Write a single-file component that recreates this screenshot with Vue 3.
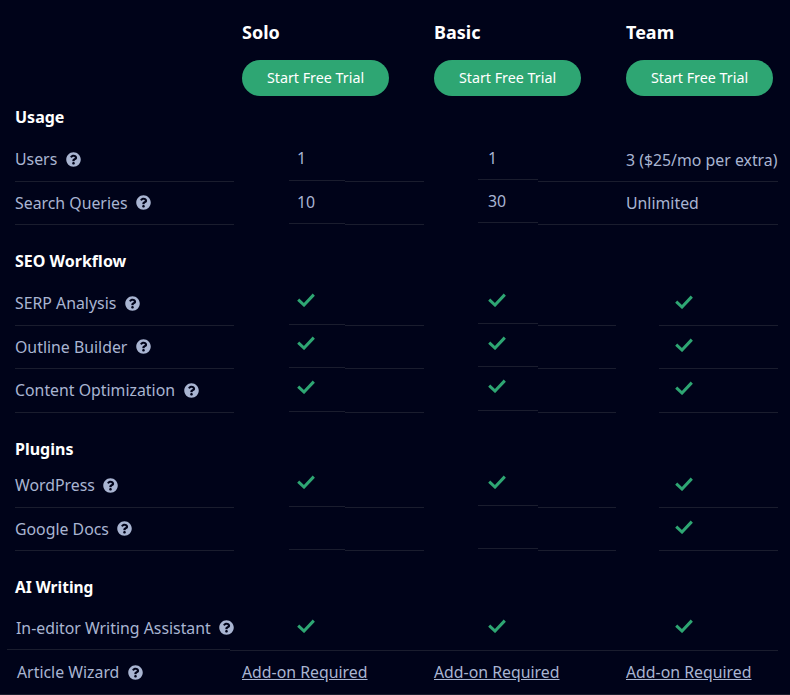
<script setup>
const plans = [
  { name: 'Solo', cls: 'solo' },
  { name: 'Basic', cls: 'basic' },
  { name: 'Team', cls: 'team' },
]
const sections = [
  {
    title: 'Usage',
    cls: 'usage',
    rows: [
      { label: 'Users', values: ['1', '1', '3 ($25/mo per extra)'] },
      { label: 'Search Queries', values: ['10', '30', 'Unlimited'] },
    ],
  },
  {
    title: 'SEO Workflow',
    cls: 'seo',
    rows: [
      { label: 'SERP Analysis', values: [true, true, true] },
      { label: 'Outline Builder', values: [true, true, true] },
      { label: 'Content Optimization', values: [true, true, true] },
    ],
  },
  {
    title: 'Plugins',
    cls: 'plugins',
    rows: [
      { label: 'WordPress', values: [true, true, true] },
      { label: 'Google Docs', values: [false, false, true] },
    ],
  },
]
</script>

<template>
  <main class="page">
    <header class="head">
      <div v-for="p in plans" :key="p.name" class="plan-head" :class="p.cls">
        <h2 class="plan-name">{{ p.name }}</h2>
        <a class="trial">Start Free Trial</a>
      </div>
    </header>

    <section v-for="s in sections" :key="s.title" class="section" :class="s.cls">
      <h3 class="title">{{ s.title }}</h3>
      <div v-for="r in s.rows" :key="r.label" class="row">
        <div class="label">
          <span>{{ r.label }}</span>
          <svg class="help" viewBox="0 0 512 512"><path d="M504 256c0 136.997-111.043 248-248 248S8 392.997 8 256C8 119.083 119.043 8 256 8s248 111.083 248 248zM262.655 90c-54.497 0-89.255 22.957-116.549 63.758-3.536 5.286-2.353 12.415 2.715 16.258l34.699 26.31c5.205 3.947 12.621 3.008 16.665-2.122 17.864-22.658 30.113-35.797 57.303-35.797 20.429 0 45.698 13.148 45.698 32.958 0 14.976-12.363 22.667-32.534 33.976C247.128 238.528 216 254.941 216 296v4c0 6.627 5.373 12 12 12h56c6.627 0 12-5.373 12-12v-1.333c0-28.462 83.186-29.647 83.186-106.667 0-58.002-60.165-102-116.531-102zM256 338c-25.365 0-46 20.635-46 46 0 25.364 20.635 46 46 46s46-20.636 46-46c0-25.365-20.635-46-46-46z"/></svg>
        </div>
        <div class="cell solo">
          <div class="seg main">
            <template v-if="r.values[0] === true"><svg class="check" viewBox="0 0 18 14"><path d="M1.2 6.6 7 12 16.8 1.6"/></svg></template>
            <template v-else>{{ r.values[0] || '' }}</template>
          </div>
          <div class="seg rest"></div>
        </div>
        <div class="cell basic">
          <div class="seg main">
            <template v-if="r.values[1] === true"><svg class="check" viewBox="0 0 18 14"><path d="M1.2 6.6 7 12 16.8 1.6"/></svg></template>
            <template v-else>{{ r.values[1] || '' }}</template>
          </div>
          <div class="seg rest"></div>
        </div>
        <div class="cell team" :class="{ text: typeof r.values[2] === 'string' }">
          <svg v-if="r.values[2] === true" class="check" viewBox="0 0 18 14"><path d="M1.2 6.6 7 12 16.8 1.6"/></svg>
          <template v-else>{{ r.values[2] }}</template>
        </div>
      </div>
    </section>

    <section class="section ai">
      <h3 class="title">AI Writing</h3>
      <div class="wide">
        <div class="label">
          <span>In-editor Writing Assistant</span>
          <svg class="help" viewBox="0 0 512 512"><path d="M504 256c0 136.997-111.043 248-248 248S8 392.997 8 256C8 119.083 119.043 8 256 8s248 111.083 248 248zM262.655 90c-54.497 0-89.255 22.957-116.549 63.758-3.536 5.286-2.353 12.415 2.715 16.258l34.699 26.31c5.205 3.947 12.621 3.008 16.665-2.122 17.864-22.658 30.113-35.797 57.303-35.797 20.429 0 45.698 13.148 45.698 32.958 0 14.976-12.363 22.667-32.534 33.976C247.128 238.528 216 254.941 216 296v4c0 6.627 5.373 12 12 12h56c6.627 0 12-5.373 12-12v-1.333c0-28.462 83.186-29.647 83.186-106.667 0-58.002-60.165-102-116.531-102zM256 338c-25.365 0-46 20.635-46 46 0 25.364 20.635 46 46 46s46-20.636 46-46c0-25.365-20.635-46-46-46z"/></svg>
        </div>
        <div class="marks">
          <div class="mark solo"><svg class="check" viewBox="0 0 18 14"><path d="M1.2 6.6 7 12 16.8 1.6"/></svg></div>
          <div class="mark basic"><svg class="check" viewBox="0 0 18 14"><path d="M1.2 6.6 7 12 16.8 1.6"/></svg></div>
          <div class="mark team"><svg class="check" viewBox="0 0 18 14"><path d="M1.2 6.6 7 12 16.8 1.6"/></svg></div>
        </div>
      </div>
      <div class="wizard">
        <div class="label">
          <span>Article Wizard</span>
          <svg class="help" viewBox="0 0 512 512"><path d="M504 256c0 136.997-111.043 248-248 248S8 392.997 8 256C8 119.083 119.043 8 256 8s248 111.083 248 248zM262.655 90c-54.497 0-89.255 22.957-116.549 63.758-3.536 5.286-2.353 12.415 2.715 16.258l34.699 26.31c5.205 3.947 12.621 3.008 16.665-2.122 17.864-22.658 30.113-35.797 57.303-35.797 20.429 0 45.698 13.148 45.698 32.958 0 14.976-12.363 22.667-32.534 33.976C247.128 238.528 216 254.941 216 296v4c0 6.627 5.373 12 12 12h56c6.627 0 12-5.373 12-12v-1.333c0-28.462 83.186-29.647 83.186-106.667 0-58.002-60.165-102-116.531-102zM256 338c-25.365 0-46 20.635-46 46 0 25.364 20.635 46 46 46s46-20.636 46-46c0-25.365-20.635-46-46-46z"/></svg>
        </div>
        <a class="addon">Add-on Required</a>
        <a class="addon">Add-on Required</a>
        <a class="addon">Add-on Required</a>
      </div>
    </section>
  </main>
</template>

<style>
html, body { background: #000319; }
</style>

<style scoped>
.page {
  width: 790px;
  height: 695px;
  overflow: hidden;
  background: #000319;
  color: #a9b5d2;
  font-family: "Noto Sans", sans-serif;
  font-size: 15.85px;
  box-sizing: border-box;
}
.head {
  display: flex;
  padding: 20px 0 0 242px;
  height: 96px;
  box-sizing: border-box;
}
.plan-head { flex: 0 0 192px; }
.plan-name {
  margin: 0 0 16px;
  color: #fff;
  font-size: 18px;
  font-weight: 700;
  line-height: 24px;
}
.trial {
  display: block;
  width: 147px;
  height: 36px;
  line-height: 35px;
  border-radius: 18px;
  background: #2ea673;
  color: #fff;
  font-size: 14.3px;
  text-align: center;
}
.title {
  margin: 0;
  padding: 24px 0 9.1px 15px;
  color: #fff;
  font-size: 16px;
  font-weight: 700;
  line-height: 24px;
}
.usage .title { padding: 9px 0 9.5px 15px; }
.plugins .title { padding-bottom: 3.8px; }
.ai .title { padding-bottom: 7.8px; font-size: 15.5px; }
.row {
  display: flex;
  height: 43.4px;
  padding-left: 15px;
}
.label {
  display: flex;
  flex: none;
  align-items: center;
  gap: 8.5px;
  width: 219px;
  padding-bottom: 0.5px;
  white-space: nowrap;
  box-sizing: border-box;
  border-bottom: 1px solid #1a1d2e;
}
.help {
  width: 15px;
  height: 15px;
  fill: #a9b5d2;
  flex: none;
}
.cell { display: flex; }
.cell.solo { width: 190px; padding-left: 55px; box-sizing: border-box; }
.cell.basic { width: 192px; padding-left: 54px; box-sizing: border-box; }
.cell.team {
  width: 162px;
  box-sizing: border-box;
  padding-left: 59px;
  padding-bottom: 1px;
  align-items: center;
  background: linear-gradient(#1a1d2e, #1a1d2e) no-repeat 43px 100% / 119px 1px;
}
.cell.team.text {
  background-position: 0 100%;
  background-size: 100% 1px;
  padding-left: 10px;
}
.seg {
  display: flex;
  align-items: center;
  box-sizing: border-box;
  border-bottom: 1px solid #1a1d2e;
}
.seg.main { padding-left: 8px; padding-bottom: 2px; }
.solo .seg.main { width: 56px; margin-bottom: 1px; }
.solo .seg.rest { width: 79px; }
.basic .seg.main { width: 60px; margin-bottom: 2px; padding-left: 10px; }
.basic .seg.rest { width: 78px; }
.check {
  width: 18px;
  height: 14px;
  margin-bottom: 4px;
  fill: none;
  stroke: #2ea673;
  stroke-width: 3;
  flex: none;
}
.wide {
  display: flex;
  height: 44px;
  padding-left: 7px;
}
.wide .label {
  width: 223px;
  padding-left: 9px;
  padding-bottom: 0;
  margin-bottom: 1px;
}
.marks {
  display: flex;
  flex: none;
  width: 548px;
  box-sizing: border-box;
  border-bottom: 1px solid #1a1d2e;
}
.mark { display: flex; align-items: center; }
.mark.solo { width: 258px; padding-left: 67px; box-sizing: border-box; }
.mark.basic { width: 187px; box-sizing: border-box; }
.wizard {
  display: flex;
  align-items: center;
  height: 44px;
  box-sizing: border-box;
  padding-left: 17px;
  border-bottom: 1px solid #1a1d2e;
}
.wizard .label {
  width: 225px;
  border: 0;
  padding-bottom: 0;
}
.addon {
  flex: 0 0 192px;
  color: #a9b5d2;
  text-decoration: underline;
}
</style>
